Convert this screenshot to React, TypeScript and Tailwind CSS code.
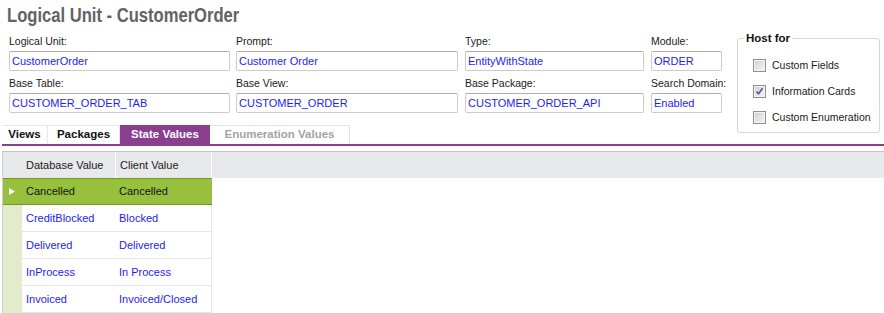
import React from "react";

const BLUE = "text-[#1d1df2]";

function Column({
  className,
  l1,
  v1,
  l2,
  v2,
}: {
  className: string;
  l1: string;
  v1: string;
  l2: string;
  v2: string;
}) {
  return (
    <div className={`flex flex-col ${className}`}>
      <div className="h-[14px] leading-[14px] text-[10.5px] text-[#1a1a1a] whitespace-nowrap">{l1}</div>
      <div className={`mt-[3px] h-[20px] border border-[#cbcbcb] border-t-[#aeaeae] rounded-[2px] pl-[2px] text-[11px] leading-[18px] ${BLUE} whitespace-nowrap overflow-hidden`}>
        {v1}
      </div>
      <div className="mt-[5px] h-[14px] leading-[14px] text-[10.5px] text-[#1a1a1a] whitespace-nowrap">{l2}</div>
      <div className={`mt-[3px] h-[20px] border border-[#cbcbcb] border-t-[#aeaeae] rounded-[2px] pl-[2px] text-[11px] leading-[18px] ${BLUE} whitespace-nowrap overflow-hidden`}>
        {v2}
      </div>
    </div>
  );
}

function Check({ label, checked }: { label: string; checked?: boolean }) {
  return (
    <div className="flex items-center h-[13px]">
      <div className="w-[13px] h-[13px] border border-[#8f8f8f] bg-[#f4f4f4] p-[1px] flex-none">
        <div className="w-full h-full bg-gradient-to-br from-[#d2d2d2] to-[#f3f3f3] relative">
          {checked && (
            <svg viewBox="0 0 9 9" className="absolute inset-0 w-[9px] h-[9px]">
              <path d="M1.5 4.5 L3.6 6.8 L7.6 1.2" fill="none" stroke="#4c5f98" strokeWidth="1.6" />
            </svg>
          )}
        </div>
      </div>
      <span className="ml-[6px] text-[10.5px] text-[#1a1a1a] whitespace-nowrap">{label}</span>
    </div>
  );
}

const rows = [
  ["CreditBlocked", "Blocked"],
  ["Delivered", "Delivered"],
  ["InProcess", "In Process"],
  ["Invoiced", "Invoiced/Closed"],
];

export default function App() {
  return (
    <div className="w-[884px] h-[313px] overflow-hidden bg-white font-['Liberation_Sans',Arial,sans-serif]">
      {/* Title */}
      <div className="h-[34px] pt-[2px] pl-[7px]">
        <div className="inline-block origin-left scale-x-[0.79] leading-[25px] text-[21px] font-bold text-[#636363] whitespace-nowrap">
          Logical Unit - CustomerOrder
        </div>
      </div>

      {/* Form */}
      <div className="h-[91px] flex items-start pl-[9px]">
        <Column className="w-[221px]" l1="Logical Unit:" v1="CustomerOrder" l2="Base Table:" v2="CUSTOMER_ORDER_TAB" />
        <Column className="w-[222px] ml-[6px]" l1="Prompt:" v1="Customer Order" l2="Base View:" v2="CUSTOMER_ORDER" />
        <Column className="w-[179px] ml-[7px]" l1="Type:" v1="EntityWithState" l2="Base Package:" v2="CUSTOMER_ORDER_API" />
        <Column className="w-[71px] ml-[7px]" l1="Module:" v1="ORDER" l2="Search Domain:" v2="Enabled" />
        <div className="relative ml-[15px] mt-[4px] w-[143px] h-[95px] flex-none border border-[#d6d6d6] rounded-[3px] pt-[20px] pl-[15px]">
          <div className="absolute -top-[8px] left-[6px] bg-white px-[2px] text-[11.5px] leading-[14px] font-bold text-[#111]">
            Host for
          </div>
          <div className="flex flex-col gap-[13px]">
            <Check label="Custom Fields" />
            <Check label="Information Cards" checked />
            <Check label="Custom Enumeration" />
          </div>
        </div>
      </div>

      {/* Tabs */}
      <div className="flex h-[19px] pl-[2px] text-[11.5px] font-bold">
        <div className="w-[46px] flex items-center justify-center border-t border-r border-[#e6e6e6] text-[#111]">Views</div>
        <div className="w-[72px] flex items-center justify-center border-t border-r border-[#e6e6e6] text-[#111]">Packages</div>
        <div className="w-[90px] flex items-center justify-center bg-[#8a3e8e] text-white">State Values</div>
        <div className="w-[140px] flex items-center justify-center border-t border-r border-[#e3e3e3] text-[#a3a3a3]">Enumeration Values</div>
      </div>
      <div className="ml-[2px] h-[2px] bg-[#8a3e8e]" />

      {/* Grid */}
      <div className="mt-[5px] ml-[2px]">
        <div className="flex h-[27px] border-t border-[#c3c3c3] border-l border-l-[#cfcfcf] bg-[#e8e9eb] text-[11px] text-[#1a1a1a]">
          <div className="w-[19px]" />
          <div className="w-[93px] pl-[4px] flex items-center">Database Value</div>
          <div className="w-[96px] pl-[4px] flex items-center border-l border-white">Client Value</div>
          <div className="flex-1 border-l border-white" />
        </div>
        <div className="w-[210px] border-l border-[#cfcfcf] text-[11px]">
          <div className="flex h-[27px] bg-[#97c13d] border-y border-[#6f9b25] text-[#111]">
            <div className="w-[19px] flex items-center pl-[6px]">
              <svg viewBox="0 0 6 7" className="w-[6px] h-[7px]">
                <path d="M0 0 L6 3.5 L0 7 Z" fill="#ffffff" />
              </svg>
            </div>
            <div className="w-[93px] pl-[4px] flex items-center">Cancelled</div>
            <div className="w-[96px] pl-[4px] flex items-center">Cancelled</div>
          </div>
          {rows.map(([a, b]) => (
            <div key={a} className={`flex h-[27px] ${BLUE}`}>
              <div className="w-[19px] bg-[#e2ebcb]" />
              <div className="flex flex-1 border-b border-r border-[#e6e6e6]">
                <div className="w-[93px] pl-[4px] flex items-center">{a}</div>
                <div className="w-[96px] pl-[4px] flex items-center">{b}</div>
              </div>
            </div>
          ))}
        </div>
      </div>
    </div>
  );
}
